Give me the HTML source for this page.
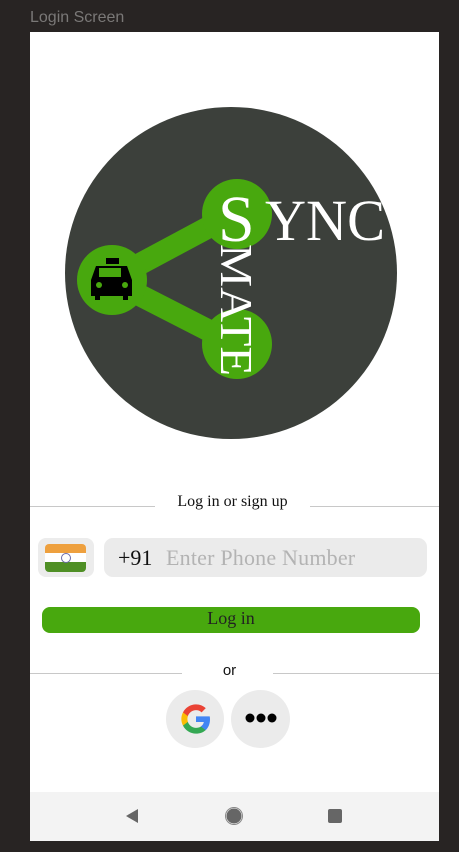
<!DOCTYPE html>
<html><head><style>
body{margin:0;width:459px;height:852px;background:#282423;position:relative;overflow:hidden;font-family:"Liberation Serif",serif}
.t{position:absolute;left:30px;top:9px;color:#7a7877;font:16px "Liberation Sans",sans-serif}
.f{position:absolute;left:30px;top:32px;width:409px;height:809px;background:#fff}
.line{position:absolute;height:1px;background:#c8c8c8}
</style></head><body>
<div class="t">Login Screen</div>
<div class="f"></div>
<svg style="position:absolute;left:0;top:0" width="459" height="852">
<circle cx="231" cy="273" r="166" fill="#3c403b"/>
<line x1="110" y1="280" x2="237" y2="212" stroke="#48a80e" stroke-width="22"/>
<line x1="110" y1="280" x2="237" y2="345" stroke="#48a80e" stroke-width="22"/>
<circle cx="112" cy="280" r="35" fill="#48a80e"/>
<circle cx="237" cy="214" r="35" fill="#48a80e"/>
<circle cx="237" cy="344" r="35" fill="#48a80e"/>
<g fill="#000">
<rect x="106" y="258" width="13" height="6"/>
<path d="M96 266 H127 L132 280 V296 H128 V300 H123 V296 H100 V300 H95 V296 H91 V280 Z"/>
</g>
<rect x="99" y="268" width="22" height="9" fill="#48a80e"/>
<circle cx="99" cy="285" r="3" fill="#48a80e"/><circle cx="125" cy="285" r="3" fill="#48a80e"/>
<text x="218" y="241" fill="#fff" font-family="Liberation Serif" font-size="66">S</text>
<text x="265" y="240" fill="#fff" font-family="Liberation Serif" font-size="58" textLength="120" lengthAdjust="spacingAndGlyphs">YNC</text>
<text transform="translate(221,244) rotate(90)" fill="#fff" font-family="Liberation Serif" font-size="46" textLength="132" lengthAdjust="spacingAndGlyphs">MATE</text>
</svg>
<div class="line" style="left:30px;top:506px;width:125px"></div>
<div class="line" style="left:310px;top:506px;width:129px"></div>
<div style="position:absolute;left:155px;width:155px;top:493px;text-align:center;font-size:16px;color:#111">Log in or sign up</div>
<div style="position:absolute;left:38px;top:538px;width:56px;height:39px;background:#ececec;border-radius:8px"></div>
<div style="position:absolute;left:45px;top:544px;width:41px;height:28px;border-radius:4px;overflow:hidden">
<div style="height:9px;background:#eea03e"></div><div style="height:9px;background:#fff"></div><div style="height:10px;background:#4f8f25"></div></div>
<div style="position:absolute;left:61px;top:553px;width:8px;height:8px;border:1px solid #6a6aa8;border-radius:50%"></div>
<div style="position:absolute;left:104px;top:538px;width:323px;height:39px;background:#ebebeb;border-radius:9px"></div>
<div style="position:absolute;left:118px;top:545px;font-size:22px;color:#111">+91</div>
<div style="position:absolute;left:166px;top:545px;font-size:22px;color:#b3b3b3;letter-spacing:0.2px">Enter Phone Number</div>
<div style="position:absolute;left:42px;top:607px;width:378px;height:26px;background:#48a80e;border-radius:8px;text-align:center;font-size:18px;line-height:23px;color:#222">Log in</div>
<div class="line" style="left:30px;top:673px;width:152px"></div>
<div class="line" style="left:273px;top:673px;width:166px"></div>
<div style="position:absolute;left:184px;width:91px;top:662px;text-align:center;font:15px 'Liberation Sans',sans-serif;color:#111">or</div>
<div style="position:absolute;left:166px;top:690px;width:58px;height:58px;background:#ebebeb;border-radius:50%"></div>
<svg style="position:absolute;left:180px;top:703px" width="32" height="32" viewBox="0 0 48 48">
<path fill="#4285F4" d="M45 24.5c0-1.6-.1-3.1-.4-4.5H24v8.5h11.8c-.5 2.7-2.1 5-4.4 6.6v5.5h7.1c4.2-3.8 6.5-9.5 6.5-16.1z"/>
<path fill="#34A853" d="M24 46c5.9 0 10.9-2 14.5-5.3l-7.1-5.5c-2 1.3-4.5 2.1-7.4 2.1-5.700 0-10.5-3.8-12.2-9H4.5v5.7C8.1 41.1 15.5 46 24 46z"/>
<path fill="#FBBC05" d="M11.8 28.3c-.4-1.3-.7-2.8-.7-4.3s.3-3 .7-4.3V14H4.5C3 17 2 20.4 2 24s1 7 2.5 10l7.3-5.7z"/>
<path fill="#EA4335" d="M24 10.7c3.2 0 6.1 1.1 8.4 3.3l6.3-6.3C34.9 4.2 29.9 2 24 2 15.5 2 8.1 6.9 4.5 14l7.3 5.7c1.7-5.2 6.5-9 12.2-9z"/>
</svg>
<div style="position:absolute;left:231px;top:690px;width:59px;height:58px;background:#ebebeb;border-radius:50%"></div>
<svg style="position:absolute;left:244px;top:711px" width="34" height="14"><circle cx="6" cy="7" r="4.5"/><circle cx="17" cy="7" r="4.5"/><circle cx="28" cy="7" r="4.5"/></svg>
<div style="position:absolute;left:30px;top:792px;width:409px;height:49px;background:#f3f3f3"></div>
<svg style="position:absolute;left:0;top:792px" width="459" height="50">
<path d="M126 24 L138 17 V31 Z" fill="#666"/>
<circle cx="234" cy="24" r="7.5" fill="#666"/><circle cx="234" cy="24" r="8.5" fill="none" stroke="#888" stroke-width="1"/>
<rect x="328" y="17" width="14" height="14" rx="2" fill="#666"/>
</svg>
</body></html>
